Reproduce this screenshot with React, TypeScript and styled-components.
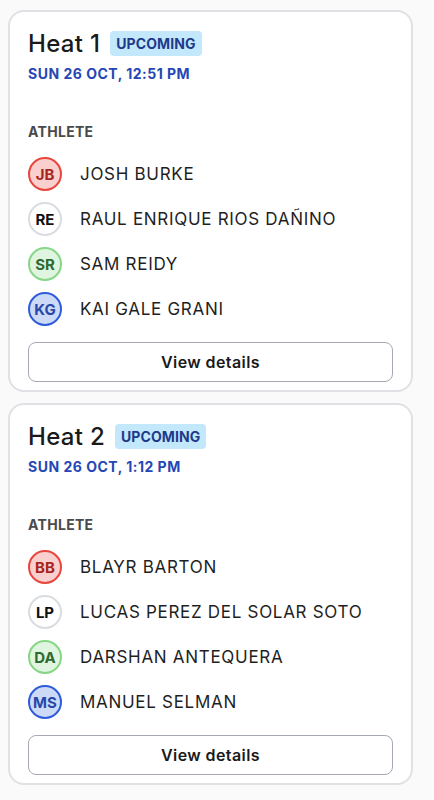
import React from 'react';
import styled, {createGlobalStyle} from "styled-components";

type Tone = 'red' | 'gray' | 'green' | 'blue';

const tones: Record<Tone, { border: string; bg: string; text: string }> = {
    red: {border: '#e8453c', bg: '#f9d0cd', text: '#a8251e'},
    gray: {border: '#d9dce1', bg: '#ffffff', text: '#111111'},
    green: {border: '#86d685', bg: '#dff5df', text: '#2d6a30'},
    blue: {border: '#2d5bdb', bg: '#ccdaf7', text: '#2847a8'},
};

const heats = [
    {
        title: 'Heat 1',
        date: 'SUN 26 OCT, 12:51 PM',
        athletes: [
            {initials: 'JB', name: 'JOSH BURKE', tone: 'red' as Tone},
            {initials: 'RE', name: 'RAUL ENRIQUE RIOS DAÑINO', tone: 'gray' as Tone},
            {initials: 'SR', name: 'SAM REIDY', tone: 'green' as Tone},
            {initials: 'KG', name: 'KAI GALE GRANI', tone: 'blue' as Tone},
        ],
    },
    {
        title: 'Heat 2',
        date: 'SUN 26 OCT, 1:12 PM',
        athletes: [
            {initials: 'BB', name: 'BLAYR BARTON', tone: 'red' as Tone},
            {initials: 'LP', name: 'LUCAS PEREZ DEL SOLAR SOTO', tone: 'gray' as Tone},
            {initials: 'DA', name: 'DARSHAN ANTEQUERA', tone: 'green' as Tone},
            {initials: 'MS', name: 'MANUEL SELMAN', tone: 'blue' as Tone},
        ],
    },
];

const App = () => {
    return (
        <>
            <GlobalStyle/>
            <Page>
                {heats.map(heat => (
                    <Card key={heat.title}>
                        <Header>
                            <Title>{heat.title}</Title>
                            <Badge>UPCOMING</Badge>
                        </Header>
                        <DateText>{heat.date}</DateText>
                        <Label>ATHLETE</Label>
                        <List>
                            {heat.athletes.map(a => (
                                <Row key={a.initials}>
                                    <Avatar tone={a.tone}>{a.initials}</Avatar>
                                    <Name>{a.name}</Name>
                                </Row>
                            ))}
                        </List>
                        <Button>View details</Button>
                    </Card>
                ))}
            </Page>
        </>
    );
};

export default App;

const GlobalStyle = createGlobalStyle`
    body {
        margin: 0;
        background: #fafafa;
        font-family: Inter, "Noto Sans", sans-serif;
    }
`

const Page = styled.main`
    display: flex;
    flex-direction: column;
    gap: 11px;
    padding: 10px 0 0 8px;
    width: 405px;
`

const Card = styled.section`
    background: #ffffff;
    border: 2px solid #dfe1e5;
    border-radius: 16px;
    padding: 18px 18px 8px;
    display: flex;
    flex-direction: column;
`

const Header = styled.div`
    display: flex;
    align-items: center;
    gap: 10px;
    height: 27px;
`

const Title = styled.h2`
    margin: 0;
    font-size: 24px;
    font-weight: 500;
    color: #1a1a1a;
    letter-spacing: 0.3px;
`

const Badge = styled.span`
    background: #c4e8fb;
    color: #1e3a8a;
    font-size: 14px;
    font-weight: 700;
    line-height: 25px;
    padding: 0 6px;
    border-radius: 4px;
    letter-spacing: 0.1px;
`

const DateText = styled.div`
    margin-top: 7px;
    font-size: 14px;
    font-weight: 700;
    line-height: 20px;
    color: #2547b5;
    letter-spacing: 0.5px;
`

const Label = styled.div`
    margin-top: 38px;
    font-size: 14px;
    font-weight: 700;
    line-height: 20px;
    color: #4a4a4a;
    letter-spacing: 0.3px;
`

const List = styled.ul`
    list-style: none;
    margin: 9.5px 0 0;
    padding: 0;
`

const Row = styled.li`
    display: flex;
    align-items: center;
    gap: 18px;
    height: 45px;
`

const Avatar = styled.span<{ tone: Tone }>`
    width: 34px;
    height: 34px;
    box-sizing: border-box;
    border-radius: 50%;
    border: 2px solid ${p => tones[p.tone].border};
    background: ${p => tones[p.tone].bg};
    color: ${p => tones[p.tone].text};
    display: flex;
    align-items: center;
    justify-content: center;
    font-size: 15px;
    font-weight: 700;
    flex-shrink: 0;
`

const Name = styled.span`
    font-size: 17px;
    color: #1f1f1f;
    letter-spacing: 0.7px;
`

const Button = styled.button`
    margin-top: 10.5px;
    height: 40px;
    width: 100%;
    background: #ffffff;
    border: 1px solid #a5a9b3;
    border-radius: 8px;
    font-family: inherit;
    font-size: 16px;
    font-weight: 600;
    color: #1a1a1a;
    letter-spacing: 0.4px;
`
